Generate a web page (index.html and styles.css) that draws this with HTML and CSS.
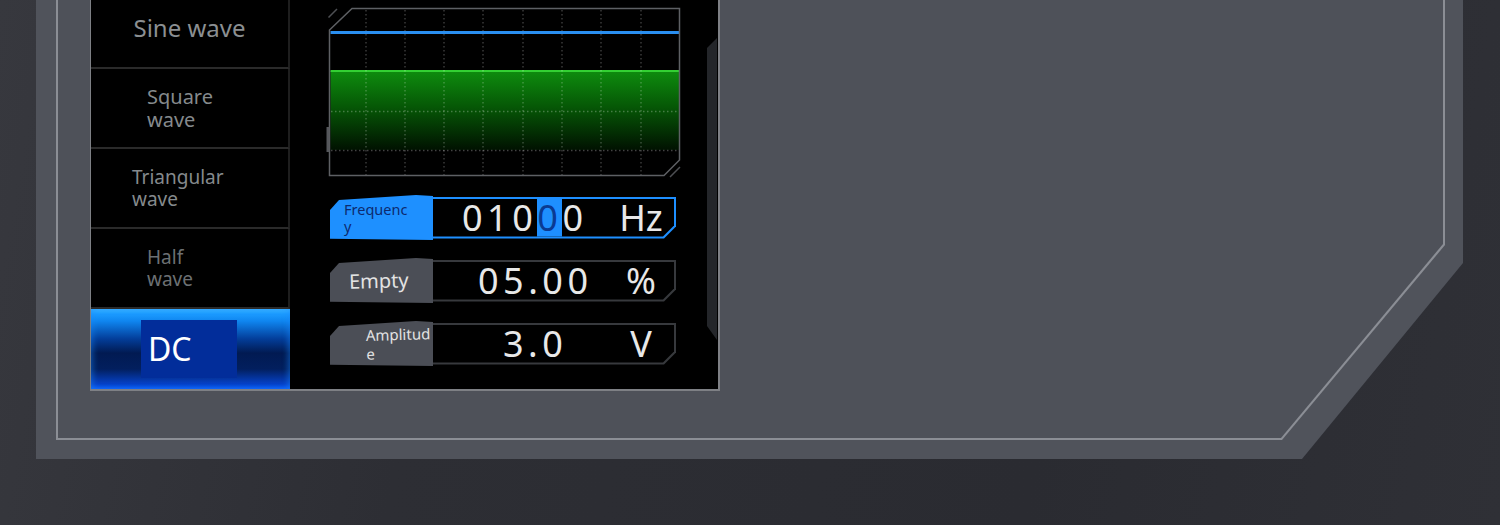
FILE: index.html
```html
<!DOCTYPE html>
<html lang="en">
<head>
  <meta charset="UTF-8">
  <meta name="viewport" content="width=device-width, initial-scale=1.0">
  <title>Signal Generator</title>
  <link rel="stylesheet" href="styles.css">
</head>
<body>
  <div class="panel">
    <div class="panel-line">
      <div class="panel-fill">
        <div class="screen">
          <ul class="waves">
            <li class="wave wave--sine"><span>Sine wave</span></li>
            <li class="wave wave--square"><span>Square<br>wave</span></li>
            <li class="wave wave--tri"><span>Triangular<br>wave</span></li>
            <li class="wave wave--half"><span>Half<br>wave</span></li>
            <li class="wave wave--dc"><span class="dc-box">DC</span></li>
          </ul>

          <div class="main">
            <!-- scope preview -->
            <svg class="scope" width="358" height="176" viewBox="326 4 358 176">
              <defs>
                <linearGradient id="level" x1="0" y1="0" x2="0" y2="1">
                  <stop offset="0" stop-color="#0e8c0e"/>
                  <stop offset="0.45" stop-color="#065806"/>
                  <stop offset="1" stop-color="#011201"/>
                </linearGradient>
              </defs>
              <rect x="330.5" y="71" width="349" height="79" fill="url(#level)"/>
              <line x1="330.5" y1="71" x2="679.5" y2="71" stroke="#33d033" stroke-width="2"/>
              <g stroke="#ffffff" stroke-opacity="0.26" stroke-width="1.3" stroke-dasharray="1.5 2.5" fill="none">
                <path d="M366 10V175M405 10V175M444 10V175M483 10V175M523 10V175M562 10V175M601 10V175M641 10V175"/>
                <path d="M331 111.5H679M331 150.5H679"/>
              </g>
              <line x1="330.5" y1="32.5" x2="679.5" y2="32.5" stroke="#2a8ff0" stroke-width="3"/>
              <path d="M329.5 30L352 8.5H679.5V160L664 175.5H329.5Z" fill="none" stroke="#5e6064" stroke-width="1.5"/>
              <path d="M328.5 17.5L337 9M670 177L680 167" stroke="#4d4f53" stroke-width="1.5"/>
              <rect x="326.5" y="127" width="3" height="25" fill="#55575b"/>
            </svg>

            <div class="params">
              <div class="param param--active">
                <div class="tag"><span class="tag-text">Frequency</span></div>
                <div class="value">
                  <div class="value-inner">
                    <span class="num num--freq">010<span class="cur">0</span>0</span>
                    <span class="unit">Hz</span>
                  </div>
                </div>
              </div>
              <div class="param">
                <div class="tag tag--wide"><span class="tag-text tag-text--big">Empty</span></div>
                <div class="value">
                  <div class="value-inner">
                    <span class="num num--duty">05.00</span>
                    <span class="unit">%</span>
                  </div>
                </div>
              </div>
              <div class="param">
                <div class="tag tag--amp"><span class="tag-text">Amplitude</span></div>
                <div class="value">
                  <div class="value-inner">
                    <span class="num num--amp">3.0</span>
                    <span class="unit">V</span>
                  </div>
                </div>
              </div>
            </div>
          </div>

          <div class="edge"></div>
        </div>
      </div>
    </div>
  </div>
</body>
</html>
```

FILE: styles.css
```css
body {
  margin: 0;
  height: 525px;
  overflow: hidden;
  background: linear-gradient(100deg, #37383e 0%, #2d2e34 30%, #2a2b31 70%, #2f3036 100%);
  font-family: "Noto Sans", "Open Sans", sans-serif;
}

/* outer metal panel with chamfered corner */
.panel {
  margin-left: 36px;
  width: 1427px;
  height: 459px;
  box-sizing: border-box;
  padding: 0 18px 19px 20px;
  background: #50535b;
  clip-path: polygon(0 0, 100% 0, 100% 263px, calc(100% - 161px) 100%, 0 100%);
}

.panel-line {
  height: 100%;
  box-sizing: border-box;
  padding: 0 2px 2px 2px;
  background: #8b8e95;
  clip-path: polygon(0 0, 100% 0, 100% 245px, calc(100% - 163px) 100%, 0 100%);
}

.panel-fill {
  height: 100%;
  box-sizing: border-box;
  padding-left: 32px;
  background: #4e5159;
  clip-path: polygon(0 0, 100% 0, 100% 244px, calc(100% - 162px) 100%, 0 100%);
}

/* lcd screen */
.screen {
  display: flex;
  width: 630px;
  height: 391px;
  box-sizing: border-box;
  background: #000;
  border: solid #7e8085;
  border-width: 0 2px 2px 1px;
  overflow: hidden;
}

.waves {
  list-style: none;
  margin: -11px 0 0;
  padding: 0;
  width: 199px;
  flex-shrink: 0;
}

.wave {
  display: flex;
  align-items: center;
  height: 78px;
  border-bottom: 2px solid #2a2a2a;
  border-right: 2px solid #1e1e1e;
  color: #858a8d;
  font-size: 19px;
  line-height: 22px;
}

.wave--sine {
  justify-content: center;
  font-size: 24px;
  color: #8b8f92;
}

.wave--square {
  padding-left: 56px;
  font-size: 20px;
  line-height: 23px;
}

.wave--tri {
  padding-left: 41px;
}

.wave--half {
  padding-left: 56px;
  color: #6c7073;
}

.wave--dc {
  height: 80px;
  border: 0;
  background: linear-gradient(to bottom, #3cb6ff 0, #1c9bff 5px, #0f86f0 12px, #033d99 30px, #011a52 44px, #021f5e 60px, #0642c8 75px, #0a58f5 80px);
  box-shadow: inset 3px 0 5px rgba(30, 140, 255, 0.35), inset -3px 0 5px rgba(30, 140, 255, 0.35);
}

.dc-box {
  display: flex;
  align-items: center;
  margin-left: 50px;
  width: 96px;
  height: 58px;
  box-sizing: border-box;
  padding-left: 7px;
  background: #022d9a;
  color: #fff;
  font-size: 32px;
}

/* right side: scope + parameters */
.main {
  flex: 1;
  padding-left: 36px;
}

.scope {
  display: block;
  margin-top: 4px;
}

.params {
  margin-top: 15px;
  padding-left: 4px;
}

.param {
  display: flex;
  width: 346px;
  height: 45px;
}

.param + .param {
  margin-top: 18px;
}

.tag {
  display: flex;
  align-items: center;
  width: 103px;
  flex-shrink: 0;
  box-sizing: border-box;
  padding-left: 14px;
  background: #4b4e56;
  clip-path: polygon(0 15px, 9px 5px, 86px 0, 100% 1px, 100% 100%, 0 97%);
}

.tag--wide {
  padding-left: 19px;
}

.tag--amp {
  padding-left: 36px;
}

.tag-text {
  width: 68px;
  font-size: 14.5px;
  line-height: 17px;
  color: #e3e3e3;
  word-break: break-all;
  transform: rotate(-1.5deg);
}

.tag-text--big {
  width: auto;
  font-size: 20px;
}

.tag--amp .tag-text {
  font-size: 15px;
  line-height: 19px;
}

.param--active .tag {
  background: #1e90ff;
}

.param--active .tag-text {
  color: #0d2a6e;
  transform: none;
}

.value {
  flex: 1;
  align-self: center;
  height: 42px;
  box-sizing: border-box;
  padding: 2px 2px 2px 0;
  background: #37393d;
  clip-path: polygon(0 0, 100% 0, 100% calc(100% - 12px), calc(100% - 12px) 100%, 0 100%);
}

.param--active .value {
  background: #1e8fff;
}

.value-inner {
  display: flex;
  align-items: center;
  height: 100%;
  background: #000;
  clip-path: polygon(0 0, 100% 0, 100% calc(100% - 11px), calc(100% - 11px) 100%, 0 100%);
  color: #e8e8e8;
  font-size: 36px;
  line-height: 38px;
}

.num {
  letter-spacing: 4.5px;
}

.num--freq { margin-left: 29px; }
.num--duty { margin-left: 45px; }
.num--amp { margin-left: 70px; }

.cur {
  display: inline-block;
  background: #1e8fff;
  color: #0a3a92;
}

.unit {
  margin-left: auto;
  margin-right: 6px;
  width: 54px;
  text-align: center;
}

.edge {
  width: 10px;
  height: 302px;
  flex-shrink: 0;
  margin: 38px 1px 0 0;
  background: #24262a;
  clip-path: polygon(0 10px, 100% 0, 100% 100%, 0 calc(100% - 14px));
}
```
